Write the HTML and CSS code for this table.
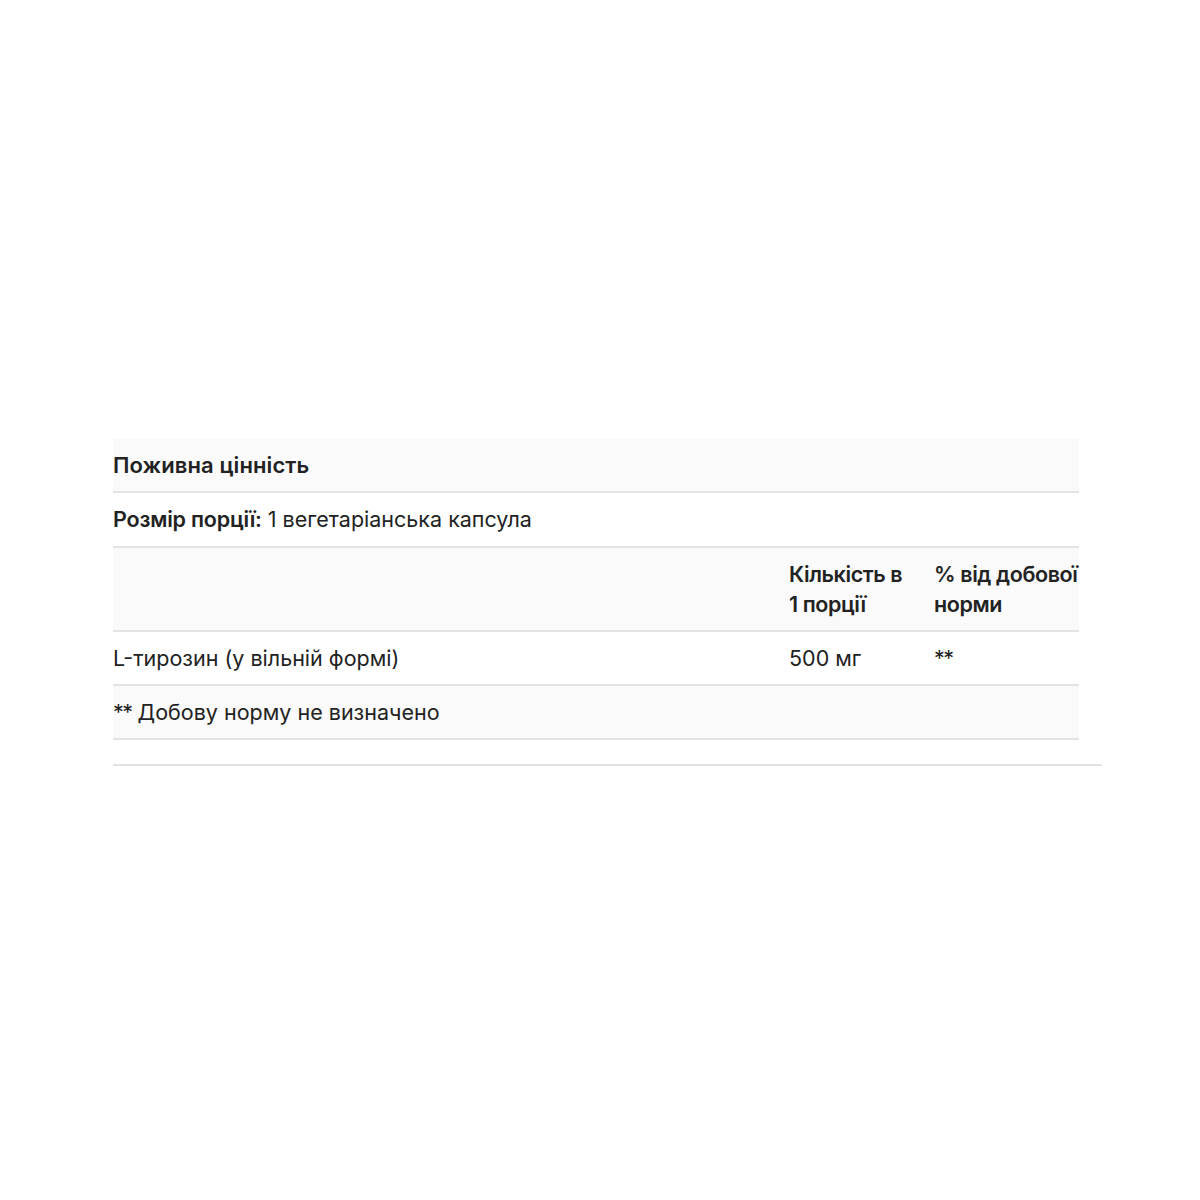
FILE: index.html
```html
<!DOCTYPE html>
<html lang="uk">
<head>
<meta charset="utf-8">
<title>Поживна цінність</title>
<link rel="stylesheet" href="styles.css">
</head>
<body>
<div class="wrap">
  <table class="facts">
    <colgroup>
      <col class="c1">
      <col class="c2">
      <col class="c3">
    </colgroup>
    <tbody>
      <tr class="shade">
        <td colspan="3" class="title">Поживна цінність</td>
      </tr>
      <tr>
        <td colspan="3"><b>Розмір порції:</b> 1 вегетаріанська капсула</td>
      </tr>
      <tr class="shade">
        <td></td>
        <td class="head">Кількість в<br>1 порції</td>
        <td class="head">% від добової<br>норми</td>
      </tr>
      <tr>
        <td>L-тирозин (у вільній формі)</td>
        <td>500 мг</td>
        <td><span class="stars">**</span></td>
      </tr>
      <tr class="shade">
        <td colspan="3"><span class="stars">**</span> Добову норму не визначено</td>
      </tr>
    </tbody>
  </table>
  <div class="rule"></div>
</div>
</body>
</html>
```

FILE: styles.css
```css
html, body {
  margin: 0;
  padding: 0;
  background: #ffffff;
}

body {
  font-family: Inter, "Noto Sans", "DejaVu Sans", sans-serif;
  font-size: 21.5px;
  color: #222222;
}

.wrap {
  width: 989px;
  margin: 439px 0 0 113px;
}

.facts {
  width: 966px;
  border-collapse: collapse;
  table-layout: fixed;
}

.c1 { width: 676px; }
.c2 { width: 145px; }
.c3 { width: 145px; }

.facts td {
  padding: 11px 0 11.3px;
  line-height: 30px;
  vertical-align: top;
  border-bottom: 2px solid #e3e3e3;
}

.facts tr.shade td {
  background: #fafafa;
}

.facts b {
  font-weight: 600;
  letter-spacing: -0.2px;
}

.title {
  font-weight: 600;
  font-size: 22px;
  letter-spacing: 0.1px;
}

.head {
  font-weight: 600;
  letter-spacing: -0.4px;
  white-space: nowrap;
  overflow: visible;
}

.stars {
  letter-spacing: -1.5px;
}

.rule {
  margin-top: 24px;
  height: 2px;
  background: #e3e3e3;
}
```
